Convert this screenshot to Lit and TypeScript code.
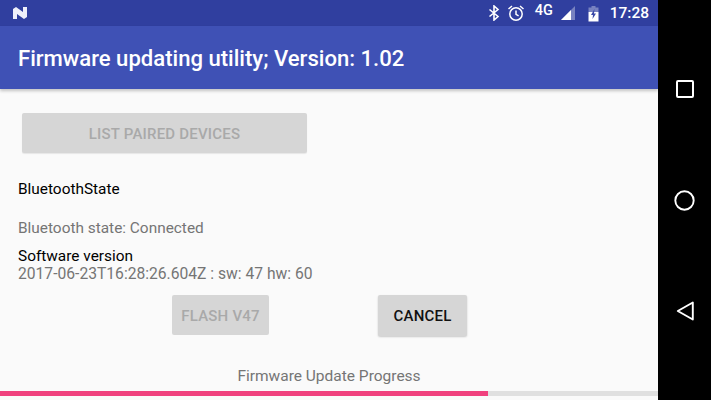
import { LitElement, html, css } from "lit";
import { customElement } from "lit/decorators.js";

@customElement("app-root")
export class AppRoot extends LitElement {
  static styles = css`
    :host { display: flex; width: 711px; height: 400px; overflow: hidden; font-family: Roboto, sans-serif; background: #000; }
    .screen { width: 658px; height: 400px; display: flex; flex-direction: column; background: #fafafa; }
    .status { height: 26px; background: #303f9f; display: flex; align-items: center; padding: 0 9px 0 12px; color: #fff; flex: none; }
    .status .spacer { flex: 1; }
    .status svg { display: block; flex: none; }
    .fourg { font-size: 14.5px; font-weight: 500; margin: -6px 0 0 10px; width: 24px; }
    .time { font-size: 15.5px; font-weight: 500; margin-left: 11px; }
    .appbar { height: 63px; background: #3f51b5; color: #fff; font-size: 22.1px; font-weight: 500; display: flex; align-items: center; padding: 1px 0 0 18px; box-sizing: border-box; flex: none; box-shadow: 0 2px 3px rgba(0,0,0,.22); position: relative; }
    .content { flex: 1; display: flex; flex-direction: column; min-height: 0; }
    .btn { box-sizing: border-box; background: #d6d6d6; border-radius: 2px; font-size: 15px; font-weight: 500; display: flex; align-items: center; justify-content: center; letter-spacing: .2px; padding-top: 1px; }
    .btn.off { color: #a9a9a9; }
    .list { width: 285px; height: 40px; margin: 24px 0 0 22px; box-shadow: 0 1px 1px rgba(0,0,0,.08); }
    .label { font-size: 15.4px; color: #000; margin-left: 18px; line-height: 18px; }
    .value { font-size: 15.65px; color: #757575; margin-left: 18px; line-height: 18px; }
    .value.short { font-size: 15.4px; }
    .state { margin-top: 27px; }
    .conn { margin-top: 21px; }
    .sw { margin-top: 10px; }
    .row { display: flex; margin-top: 12px; padding-left: 172px; }
    .flash { width: 97px; height: 40px; }
    .cancel { width: 89px; height: 41px; margin-left: 109px; color: #111; box-shadow: 0 1px 2px rgba(0,0,0,.2); padding-top: 0; }
    .progress-label { font-size: 15.5px; color: #757575; text-align: center; line-height: 18px; margin-top: 31px; }
    .bar { height: 5px; margin-top: 6px; background: #e0e0e0; }
    .bar div { height: 100%; background: #f0417e; }
    .nav { width: 53px; height: 400px; flex: none; background: #000; display: flex; flex-direction: column; align-items: center; padding-top: 80px; box-sizing: border-box; }
    .nav svg { display: block; flex: none; }
    .nav .circle { margin-top: 92px; }
    .nav .back { margin-top: 90px; }
  `;

  render() {
    return html`
      <div class="screen">
        <div class="status">
          <svg width="16" height="14" viewBox="0 0 16 14"><path d="M1 3 L4 1 L11 6 V1 H15 V11 L12 13 L5 8 V13 H1 Z" fill="#eef0fa"/></svg>
          <div class="spacer"></div>
          <svg width="12" height="16" viewBox="0 0 12 16"><path d="M1.500 4.500 L10 11.500 L6 15 V1 L10 4.500 L1.500 11.500" fill="none" stroke="#fff" stroke-width="1.600"/></svg>
          <svg style="margin-left:7px" width="18" height="18" viewBox="0 0 18 18"><circle cx="9" cy="10" r="6.200" fill="none" stroke="#fff" stroke-width="1.500"/><path d="M9 6.500 V10.300 L11.600 11.800 M1.500 5 L5 2 M16.500 5 L13 2" fill="none" stroke="#fff" stroke-width="1.500"/></svg>
          <span class="fourg">4G</span>
          <svg style="margin-left:1px" width="16" height="16" viewBox="0 0 16 16"><path d="M1 15 L15 1 V15 Z" fill="#fff" fill-opacity=".35"/><path d="M1 15 L11 5 V15 Z" fill="#fff"/></svg>
          <svg style="margin-left:12px" width="11" height="17" viewBox="0 0 11 17"><path d="M3.500 1 H7.500 V2.500 H10.500 V7 H.5 V2.500 H3.500 Z" fill="#fff" fill-opacity=".35"/><path d="M.5 7 H10.500 V16.500 H.5 Z" fill="#fff"/><path d="M6.500 4 L3 10 H5 L4.500 14 L8 8.500 H6 Z" fill="#3a49a8"/></svg>
          <span class="time">17:28</span>
        </div>
        <div class="appbar">Firmware updating utility; Version: 1.02</div>
        <div class="content">
          <div class="btn off list">LIST PAIRED DEVICES</div>
          <div class="label state">BluetoothState</div>
          <div class="value short conn">Bluetooth state: Connected</div>
          <div class="label sw">Software version</div>
          <div class="value">2017-06-23T16:28:26.604Z : sw: 47 hw: 60</div>
          <div class="row">
            <div class="btn off flash">FLASH V47</div>
            <div class="btn cancel">CANCEL</div>
          </div>
          <div class="progress-label">Firmware Update Progress</div>
          <div class="bar"><div style="width:488px"></div></div>
        </div>
      </div>
      <div class="nav">
        <svg width="18" height="18" viewBox="0 0 18 18"><rect x="1" y="1" width="16" height="16" rx="1" fill="none" stroke="#fff" stroke-width="2"/></svg>
        <svg class="circle" width="21" height="21" viewBox="0 0 21 21"><circle cx="10.500" cy="10.500" r="9.200" fill="none" stroke="#fff" stroke-width="1.900"/></svg>
        <svg class="back" width="18" height="20" viewBox="0 0 18 20"><path d="M16.800 1.500 V18.500 L1.800 10 Z" fill="none" stroke="#fff" stroke-width="1.900" stroke-linejoin="round"/></svg>
      </div>
    `;
  }
}
